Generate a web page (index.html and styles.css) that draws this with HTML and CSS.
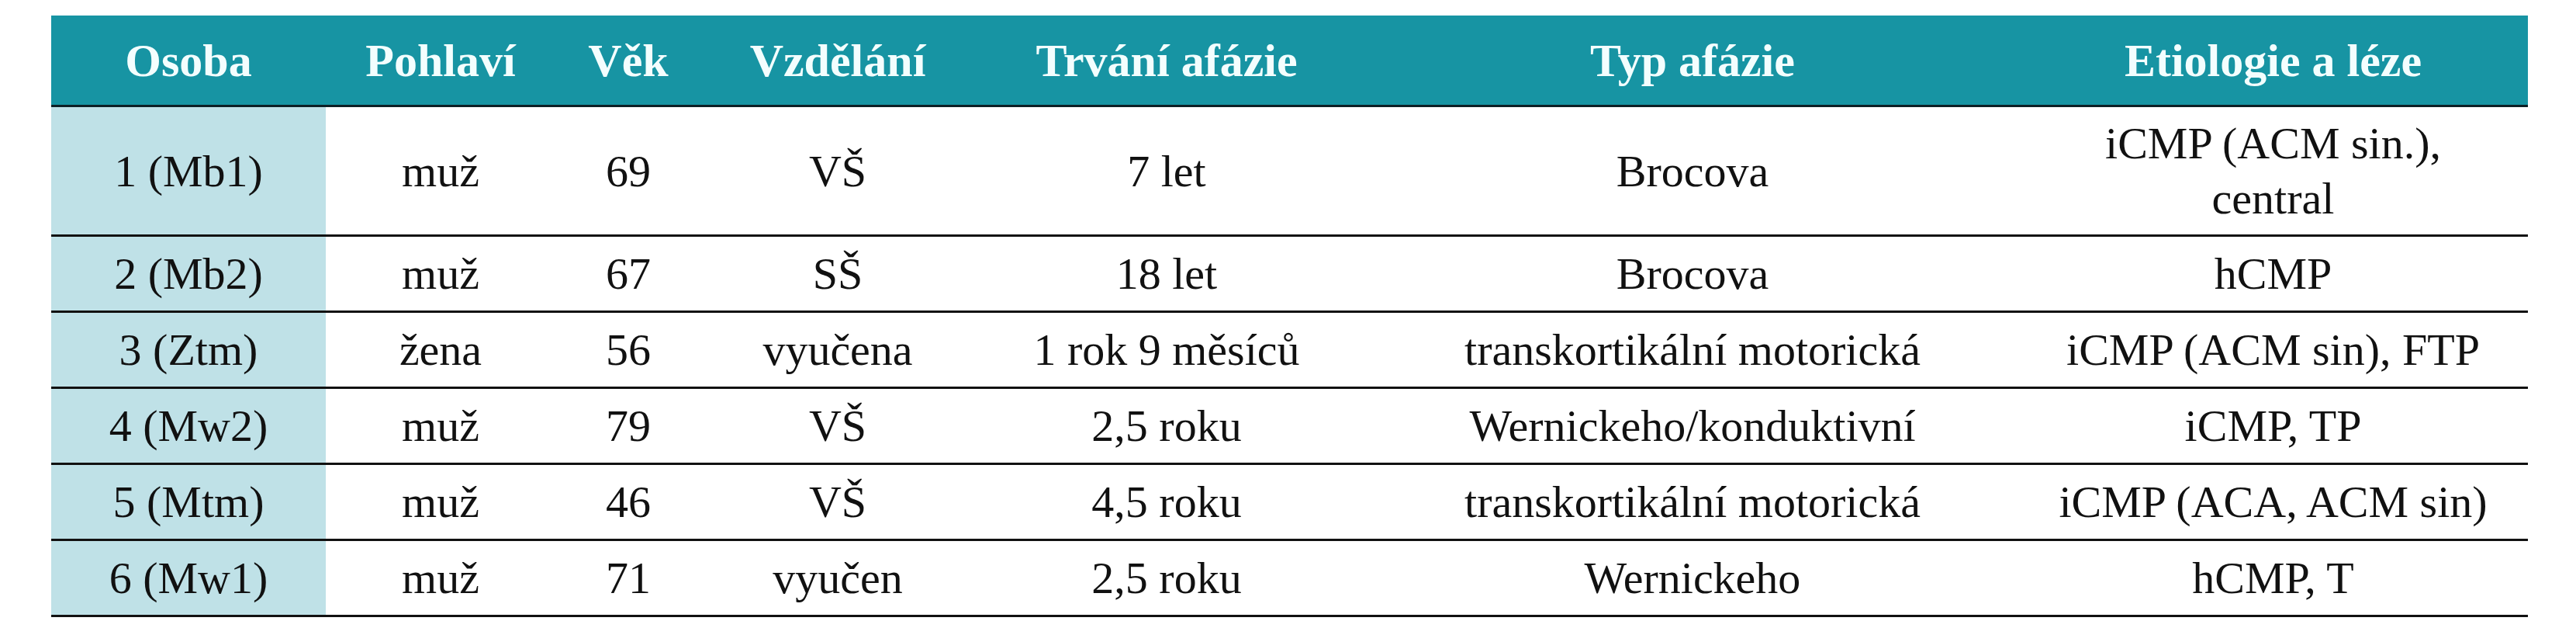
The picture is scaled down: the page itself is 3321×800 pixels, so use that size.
FILE: index.html
```html
<!DOCTYPE html>
<html lang="cs">
<head>
<meta charset="utf-8">
<title>Tabulka</title>
<link rel="stylesheet" href="styles.css">
</head>
<body>
<table class="data">
  <colgroup>
    <col class="c1"><col class="c2"><col class="c3"><col class="c4"><col class="c5"><col class="c6"><col class="c7">
  </colgroup>
  <thead>
    <tr>
      <th>Osoba</th><th>Pohlaví</th><th>Věk</th><th>Vzdělání</th><th>Trvání afázie</th><th>Typ afázie</th><th class="last">Etiologie a léze</th>
    </tr>
  </thead>
  <tbody>
    <tr class="tall">
      <td class="person">1 (Mb1)</td><td>muž</td><td>69</td><td>VŠ</td><td>7 let</td><td>Brocova</td><td class="last">iCMP (ACM sin.),<br>central</td>
    </tr>
    <tr>
      <td class="person">2 (Mb2)</td><td>muž</td><td>67</td><td>SŠ</td><td>18 let</td><td>Brocova</td><td class="last">hCMP</td>
    </tr>
    <tr>
      <td class="person">3 (Ztm)</td><td>žena</td><td>56</td><td>vyučena</td><td>1 rok 9 měsíců</td><td>transkortikální motorická</td><td class="last">iCMP (ACM sin), FTP</td>
    </tr>
    <tr>
      <td class="person">4 (Mw2)</td><td>muž</td><td>79</td><td>VŠ</td><td>2,5 roku</td><td>Wernickeho/konduktivní</td><td class="last">iCMP, TP</td>
    </tr>
    <tr>
      <td class="person">5 (Mtm)</td><td>muž</td><td>46</td><td>VŠ</td><td>4,5 roku</td><td>transkortikální motorická</td><td class="last">iCMP (ACA, ACM sin)</td>
    </tr>
    <tr>
      <td class="person">6 (Mw1)</td><td>muž</td><td>71</td><td>vyučen</td><td>2,5 roku</td><td>Wernickeho</td><td class="last">hCMP, T</td>
    </tr>
  </tbody>
</table>
</body>
</html>
```

FILE: styles.css
```css
html, body {
  margin: 0;
  padding: 0;
  background: #ffffff;
}

.data {
  margin: 20px 0 0 66px;
  width: 3193px;
  table-layout: fixed;
  border-collapse: separate;
  border-spacing: 0;
  font-family: "Liberation Serif", "Times New Roman", serif;
}

.c1 { width: 354px; }
.c2 { width: 296px; }
.c3 { width: 188px; }
.c4 { width: 352px; }
.c5 { width: 496px; }
.c6 { width: 860px; }
.c7 { width: 647px; }

.data th {
  height: 115px;
  padding: 0;
  background: #1794a3;
  color: #f3fefe;
  font-weight: bold;
  font-size: 60px;
  line-height: 70px;
  text-align: center;
  vertical-align: middle;
  border-bottom: 3px solid #0c1f25;
  white-space: nowrap;
}

.data td {
  height: 95px;
  padding: 0;
  color: #111111;
  font-size: 58px;
  line-height: 71px;
  text-align: center;
  vertical-align: middle;
  border-bottom: 3px solid #111111;
  white-space: nowrap;
}

.data tr.tall td {
  height: 164px;
}

.data td.person {
  background: #bfe1e7;
}

.data .last {
  padding-right: 10px;
}
```
